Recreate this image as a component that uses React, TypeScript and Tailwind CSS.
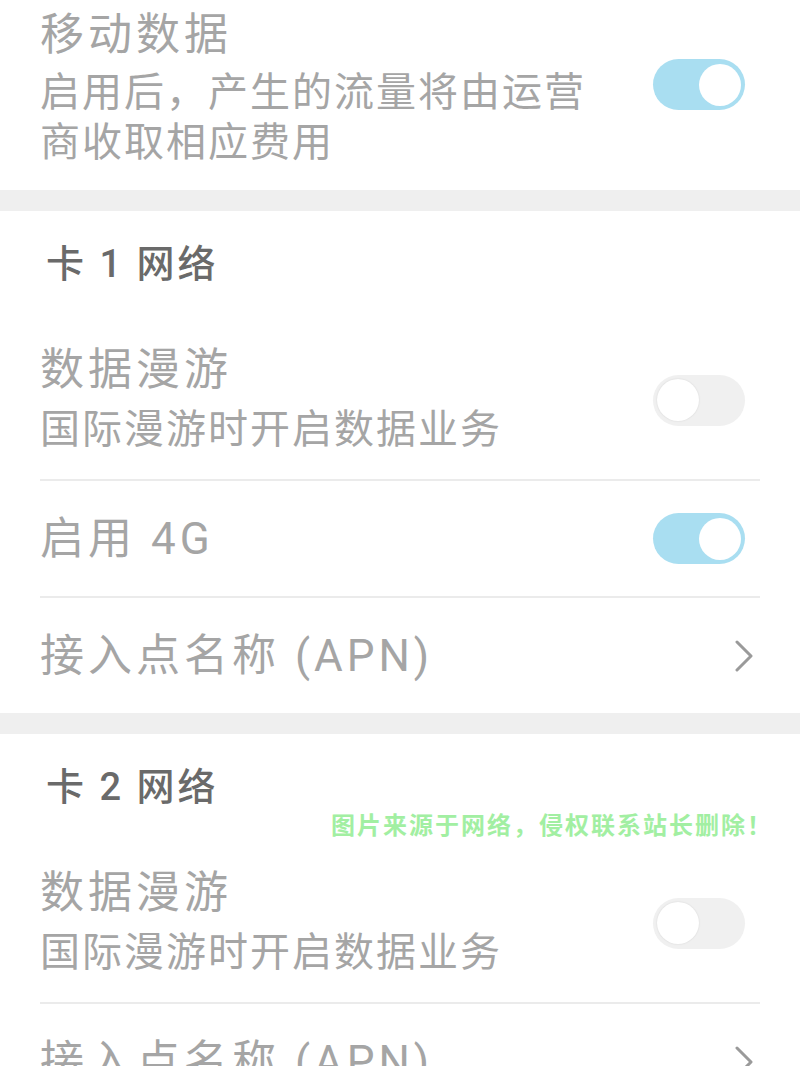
import React from 'react'

const font = { fontFamily: 'Roboto, "Noto Sans CJK SC", sans-serif' }

const Toggle: React.FC<{ on: boolean }> = ({ on }) => (
  <div
    className={`w-[92px] h-[51px] rounded-full flex items-center px-[4px] shrink-0 ${
      on ? 'bg-[#a9def1] justify-end' : 'bg-[#f0f0f0] justify-start'
    }`}
  >
    <div
      className={`w-[42px] h-[42px] rounded-full bg-white ${on ? '' : 'shadow-[0_0_2px_rgba(0,0,0,0.12)]'}`}
    />
  </div>
)

const Chevron = () => (
  <svg width="20" height="32" viewBox="0 0 20 32" className="shrink-0 mr-[-9px]">
    <polyline points="3,2 17,16 3,30" fill="none" stroke="#9a9a9a" strokeWidth="3" strokeLinecap="round" strokeLinejoin="round" />
  </svg>
)

const SectionHeader: React.FC<{ text: string }> = ({ text }) => (
  <div className="h-[107px] flex items-center pl-[46px] text-[38px] tracking-[3px] font-medium text-[#6a6a6a]">
    {text}
  </div>
)

const SwitchRow: React.FC<{ title: string; sub?: string; on: boolean }> = ({ title, sub, on }) => (
  <div className={`flex items-center justify-between pl-[40px] pr-[55px] ${sub ? 'pt-[22px] pb-[19px]' : 'h-[115px]'}`}>
    <div className="flex flex-col">
      <div className="text-[44px] leading-[60px] tracking-[4px] text-[#a5a5a5]">{title}</div>
      {sub && <div className="text-[40px] leading-[60px] tracking-[2px] text-[#a5a5a5]">{sub}</div>}
    </div>
    <Toggle on={on} />
  </div>
)

const LinkRow: React.FC<{ title: string }> = ({ title }) => (
  <div className="h-[115px] flex items-center justify-between pl-[40px] pr-[55px]">
    <div className="text-[44px] leading-[60px] tracking-[4px] text-[#a5a5a5] whitespace-nowrap">{title}</div>
    <Chevron />
  </div>
)

const Divider = () => <div className="mx-[40px] h-[2px] bg-[#ebebeb]" />

const Band = () => <div className="h-[21px] bg-[#efefef]" />

export default function App() {
  return (
    <div className="relative w-[800px] h-[1066px] overflow-hidden bg-white" style={font}>
      <div className="h-[190px] flex items-center justify-between pl-[40px] pr-[55px]">
        <div className="flex flex-col self-start pt-[5px]">
          <div className="text-[44px] leading-[60px] tracking-[4px] text-[#a5a5a5]">移动数据</div>
          <div className="mt-[3px] w-[560px] text-[40px] leading-[50px] tracking-[2px] text-[#a5a5a5]">
            启用后，产生的流量将由运营商收取相应费用
          </div>
        </div>
        <div className="self-start mt-[59px]">
          <Toggle on />
        </div>
      </div>

      <Band />

      <SectionHeader text="卡 1 网络" />
      <SwitchRow title="数据漫游" sub="国际漫游时开启数据业务" on={false} />
      <Divider />
      <SwitchRow title="启用 4G" on />
      <Divider />
      <LinkRow title="接入点名称 (APN)" />

      <Band />

      <SectionHeader text="卡 2 网络" />
      <SwitchRow title="数据漫游" sub="国际漫游时开启数据业务" on={false} />
      <Divider />
      <LinkRow title="接入点名称 (APN)" />

      <div className="absolute right-[27px] top-[808px] text-[24px] font-bold tracking-[2px] text-[#a2efa2]">
        图片来源于网络，侵权联系站长删除！
      </div>
    </div>
  )
}
